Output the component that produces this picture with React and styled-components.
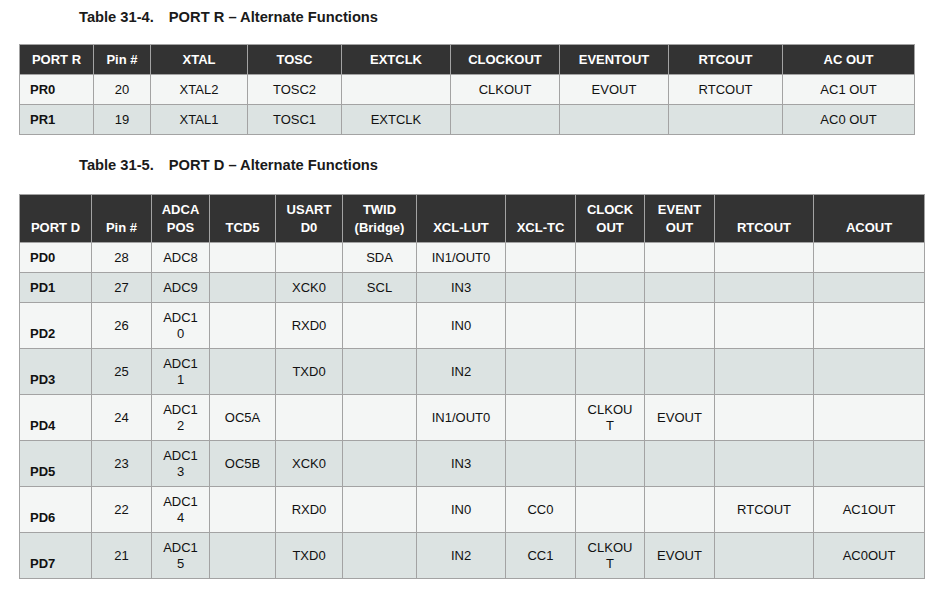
import React from "react";
import styled, { createGlobalStyle } from "styled-components";

const GlobalStyle = createGlobalStyle`
    body {
        margin: 0;
        background: #ffffff;
        font-family: "Liberation Sans", Arial, sans-serif;
        color: #111;
    }
`;

const Page = styled.div`
    padding: 7px 0 0 19px;
`;

const Section = styled.section`
    & + & {
        margin-top: 20px;
    }
`;

const Title = styled.h4`
    margin: 0 0 ${(p) => p.$gap}px 60px;
    font-size: 14.7px;
    line-height: 20px;
    font-weight: 700;
    color: #1a1a1a;

    span {
        margin-left: 15px;
    }
`;

const Table = styled.table`
    border-collapse: collapse;
    table-layout: fixed;
    width: ${(p) => p.$width}px;
    font-size: 13px;
`;

const Head = styled.th`
    background: #333333;
    color: #ffffff;
    font-weight: 700;
    line-height: 18px;
    padding: 6px 4px 5px;
    text-align: center;
    vertical-align: bottom;
    border: 1px solid #a3a3a3;
`;

const Row = styled.tr`
    background: ${(p) => (p.$alt ? "#dce3e2" : "#f4f6f5")};
`;

const Cell = styled.td`
    line-height: 16px;
    padding: 7px 4px 6px;
    text-align: ${(p) => (p.$name ? "left" : "center")};
    padding-left: ${(p) => (p.$name ? "10px" : "4px")};
    font-weight: ${(p) => (p.$name ? 700 : 400)};
    vertical-align: ${(p) => (p.$name ? "bottom" : "middle")};
    border: 1px solid #a3a3a3;
`;

const split = (t) =>
    t.split("\n").map((part, i) => (
        <React.Fragment key={i}>
            {i > 0 && <br />}
            {part}
        </React.Fragment>
    ));

const portR = {
    widths: [74, 57, 97, 94, 109, 109, 109, 114, 132],
    heads: ["PORT R", "Pin #", "XTAL", "TOSC", "EXTCLK", "CLOCKOUT", "EVENTOUT", "RTCOUT", "AC OUT"],
    rows: [
        ["PR0", "20", "XTAL2", "TOSC2", "", "CLKOUT", "EVOUT", "RTCOUT", "AC1 OUT"],
        ["PR1", "19", "XTAL1", "TOSC1", "EXTCLK", "", "", "", "AC0 OUT"],
    ],
};

const portD = {
    widths: [72, 60, 58, 66, 67, 74, 89, 70, 69, 70, 99, 111],
    heads: ["PORT D", "Pin #", "ADCA\nPOS", "TCD5", "USART\nD0", "TWID\n(Bridge)", "XCL-LUT", "XCL-TC", "CLOCK\nOUT", "EVENT\nOUT", "RTCOUT", "ACOUT"],
    rows: [
        ["PD0", "28", "ADC8", "", "", "SDA", "IN1/OUT0", "", "", "", "", ""],
        ["PD1", "27", "ADC9", "", "XCK0", "SCL", "IN3", "", "", "", "", ""],
        ["PD2", "26", "ADC1\n0", "", "RXD0", "", "IN0", "", "", "", "", ""],
        ["PD3", "25", "ADC1\n1", "", "TXD0", "", "IN2", "", "", "", "", ""],
        ["PD4", "24", "ADC1\n2", "OC5A", "", "", "IN1/OUT0", "", "CLKOU\nT", "EVOUT", "", ""],
        ["PD5", "23", "ADC1\n3", "OC5B", "XCK0", "", "IN3", "", "", "", "", ""],
        ["PD6", "22", "ADC1\n4", "", "RXD0", "", "IN0", "CC0", "", "", "RTCOUT", "AC1OUT"],
        ["PD7", "21", "ADC1\n5", "", "TXD0", "", "IN2", "CC1", "CLKOU\nT", "EVOUT", "", "AC0OUT"],
    ],
};

function PortTable({ data }) {
    const total = data.widths.reduce((a, b) => a + b, 0);
    return (
        <Table $width={total}>
            <colgroup>
                {data.widths.map((w, i) => (
                    <col key={i} style={{ width: w }} />
                ))}
            </colgroup>
            <thead>
                <tr>
                    {data.heads.map((h, i) => (
                        <Head key={i}>{split(h)}</Head>
                    ))}
                </tr>
            </thead>
            <tbody>
                {data.rows.map((row, r) => (
                    <Row key={r} $alt={r % 2 === 1}>
                        {row.map((c, i) => (
                            <Cell key={i} $name={i === 0}>
                                {split(c)}
                            </Cell>
                        ))}
                    </Row>
                ))}
            </tbody>
        </Table>
    );
}

function App() {
    return (
        <>
            <GlobalStyle />
            <Page>
                <Section>
                    <Title $gap={17}>
                        Table 31-4.<span>PORT R – Alternate Functions</span>
                    </Title>
                    <PortTable data={portR} />
                </Section>
                <Section>
                    <Title $gap={19}>
                        Table 31-5.<span>PORT D – Alternate Functions</span>
                    </Title>
                    <PortTable data={portD} />
                </Section>
            </Page>
        </>
    );
}

export default App;
